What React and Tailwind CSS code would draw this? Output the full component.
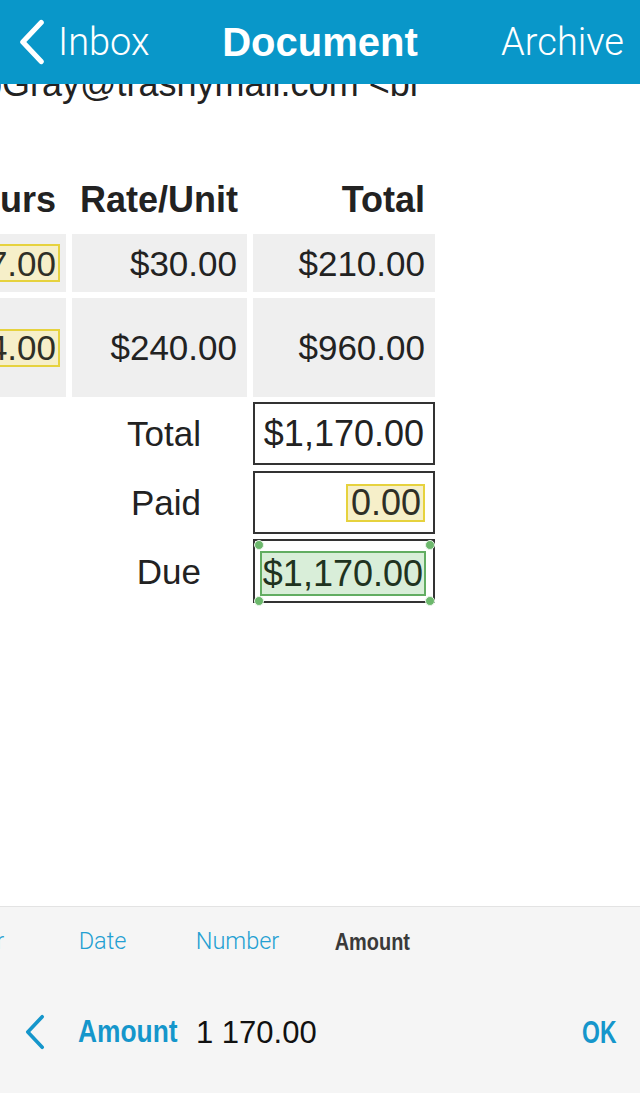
import React from 'react';

const doc = { fontFamily: '"Liberation Sans", Arial, sans-serif' };
const light = { fontFamily: 'Roboto, "Liberation Sans", sans-serif' };

const Chevron = ({ className, color, width = 4 }) => (
  <svg className={className} viewBox="0 0 24 40" fill="none">
    <path d="M20 3 L4 20 L20 37" stroke={color} strokeWidth={width} strokeLinecap="round" strokeLinejoin="round" />
  </svg>
);

// condensed bold look, squeezed horizontally
const Narrow = ({ children, className = '' }) => (
  <span className={`inline-block whitespace-nowrap font-bold leading-none ${className}`} style={doc}>
    {children}
  </span>
);

const Cell = ({ children, className = '' }) => (
  <div className={`bg-[#efefef] flex items-center justify-end ${className}`}>{children}</div>
);

const Yellow = ({ children, className = '' }) => (
  <span className={`bg-[#f6efc9] border-2 border-[#e6d23e] h-[38px] flex items-center pl-[3px] pr-[2px] leading-none text-[#2f2f26] ${className}`}>
    {children}
  </span>
);

const Dot = ({ className }) => (
  <span className={`absolute w-[10px] h-[10px] rounded-full bg-[#6cb86c] border border-[#e9f5e9] ${className}`} />
);

export default function App() {
  const tabs = ['Vendor', 'Date', 'Number', 'Amount'];

  return (
    <div className="w-[640px] h-[1093px] bg-white flex flex-col overflow-hidden">
      {/* nav bar */}
      <div className="h-[84px] shrink-0 bg-[#0997c9] grid grid-cols-[1fr_auto_1fr] items-center text-white">
        <div className="flex items-center pl-[18px]">
          <Chevron className="w-[28px] h-[46px]" color="#ffffff" width={4.5} />
          <span className="ml-[12px] text-[38px] font-light leading-none" style={light}>Inbox</span>
        </div>
        <span className="text-[40px] font-bold leading-none" style={doc}>Document</span>
        <span className="justify-self-end pr-[16px] text-[38px] font-light leading-none" style={light}>Archive</span>
      </div>

      {/* document page */}
      <div className="flex-1 overflow-hidden text-[#222]" style={doc}>
        <div className="mt-[-20px] ml-[-18px] text-[36px] leading-[40px] whitespace-nowrap">
          bGray@trashymail.com &lt;br
        </div>

        <div className="ml-[-54px] mt-[76px] flex flex-col text-[35px] leading-none">
          <div className="grid grid-cols-[120px_175px_182px] gap-x-[6px] h-[40px] leading-[40px] font-bold text-[36px] text-right">
            <span className="pr-[10px]">Hours</span>
            <span className="pr-[9px]">Rate/Unit</span>
            <span className="pr-[10px]">Total</span>
          </div>

          <div className="grid grid-cols-[120px_175px_182px] gap-x-[6px] h-[58px] mt-[14px]">
            <Cell className="pr-[6px]"><Yellow>7.00</Yellow></Cell>
            <Cell className="pr-[10px]">$30.00</Cell>
            <Cell className="pr-[10px]">$210.00</Cell>
          </div>

          <div className="grid grid-cols-[120px_175px_182px] gap-x-[6px] h-[99px] mt-[6px]">
            <Cell className="pr-[6px]"><Yellow>4.00</Yellow></Cell>
            <Cell className="pr-[10px]">$240.00</Cell>
            <Cell className="pr-[10px]">$960.00</Cell>
          </div>

          <div className="grid grid-cols-[120px_175px_182px] gap-x-[6px] h-[63px] mt-[5px]">
            <span />
            <span className="flex items-center justify-end pr-[46px]">Total</span>
            <span className="border-2 border-[#333] flex items-center justify-end pr-[9px] text-[36px]">$1,170.00</span>
          </div>

          <div className="grid grid-cols-[120px_175px_182px] gap-x-[6px] h-[63px] mt-[6px]">
            <span />
            <span className="flex items-center justify-end pr-[46px]">Paid</span>
            <span className="border-2 border-[#333] flex items-center justify-end pr-[8px] text-[36px]">
              <Yellow className="h-[37px]">0.00</Yellow>
            </span>
          </div>

          <div className="grid grid-cols-[120px_175px_182px] gap-x-[6px] h-[64px] mt-[5px]">
            <span />
            <span className="flex items-center justify-end pr-[46px]">Due</span>
            <span className="relative border-2 border-[#333] flex pt-[10px] pb-[5px] pl-[5px] pr-[7px] text-[36px]">
              <span className="flex-1 bg-[#d9eed9] border-2 border-[#62ad62] flex items-center justify-end pr-[1px] text-[#1f3320]">
                $1,170.00
              </span>
              <Dot className="-left-[1px] -top-[1px]" />
              <Dot className="-right-[2px] -top-[1px]" />
              <Dot className="-left-[1px] -bottom-[5px]" />
              <Dot className="-right-[2px] -bottom-[5px]" />
            </span>
          </div>
        </div>
      </div>

      {/* field picker */}
      <div className="h-[187px] shrink-0 bg-[#f5f5f5] border-t border-[#e3e3e3] flex flex-col">
        <div className="flex ml-[-100px] h-[70px] items-center">
          {tabs.map((t) =>
            t === 'Amount' ? (
              <span key={t} className="w-[135px] shrink-0 flex justify-center">
                <Narrow className="text-[24px] text-[#3a3a3a] scale-x-[0.83] origin-center">{t}</Narrow>
              </span>
            ) : (
              <span
                key={t}
                className="w-[135px] shrink-0 text-center text-[23.5px] font-light text-[#239fd2]"
                style={light}
              >
                {t}
              </span>
            )
          )}
        </div>
        <div className="flex items-center h-[50px] mt-[30px] pl-[24px] pr-[24px]">
          <Chevron className="w-[22px] h-[36px]" color="#1596cb" width={4} />
          <span className="ml-[32px] w-[99px] shrink-0">
            <Narrow className="text-[31px] text-[#1596cb] scale-x-[0.85] origin-left">Amount</Narrow>
          </span>
          <span className="ml-[19px] text-[31px] leading-none text-[#111]" style={doc}>1 170.00</span>
          <span className="ml-auto w-[34px] flex justify-end">
            <Narrow className="text-[31px] text-[#1596cb] scale-x-[0.74] origin-right">OK</Narrow>
          </span>
        </div>
      </div>
    </div>
  );
}
